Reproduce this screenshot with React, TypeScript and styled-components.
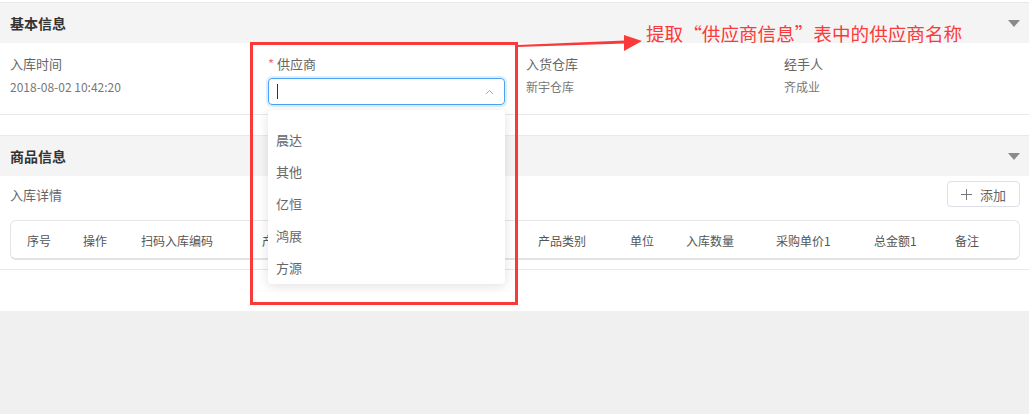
import styled, { createGlobalStyle } from "styled-components";

const GlobalStyle = createGlobalStyle`
  html, body {
    margin: 0;
    padding: 0;
    background: #f0f0f0;
    font-family: "Noto Sans CJK SC", "Liberation Sans", sans-serif;
  }
  * {
    box-sizing: border-box;
  }
`;

const Card = styled.div`
  position: relative;
  background: #fff;
  padding-top: 2px;
  padding-bottom: 41px;
  box-shadow: 0 1px 3px rgba(0, 0, 0, 0.12);
`;

const Section = styled.section<{ $gap?: number }>`
  margin-top: ${(props) => props.$gap || 0}px;
`;

const SectionHeader = styled.div`
  height: 41px;
  background: #f4f4f4;
  border-top: 1px solid #e9e9e9;
  display: flex;
  align-items: center;
  justify-content: space-between;
  padding: 0 9px 0 10px;
`;

const SectionTitle = styled.h3`
  margin: 0;
  font-size: 14px;
  font-weight: 700;
  color: #333;
`;

const Caret = styled.span`
  width: 0;
  height: 0;
  border-left: 6px solid transparent;
  border-right: 6px solid transparent;
  border-top: 7px solid #8a8a8a;
`;

const FormGrid = styled.div`
  display: grid;
  grid-template-columns: repeat(4, 258px);
  padding: 13px 0 0 10px;
  height: 72px;
  border-bottom: 1px solid #e8e8e8;
`;

const Field = styled.div`
  position: relative;
  display: flex;
  flex-direction: column;
`;

const Label = styled.label`
  font-size: 13px;
  line-height: 16px;
  color: #666;
`;

const Required = styled.span`
  color: #f56c6c;
  margin-right: 3px;
`;

const Value = styled.div`
  margin-top: 7px;
  font-size: 12px;
  line-height: 16px;
  color: #777;
`;

const SelectBox = styled.div`
  margin-top: 6px;
  width: 237px;
  height: 27px;
  border: 1px solid #4aa3f0;
  border-radius: 4px;
  box-shadow: 0 0 0 2px rgba(64, 158, 255, 0.18);
  display: flex;
  align-items: center;
  justify-content: space-between;
  padding: 0 10px 0 8px;
`;

const TextCaret = styled.span`
  width: 1px;
  height: 15px;
  background: #333;
`;

const Dropdown = styled.ul`
  position: absolute;
  left: 0;
  top: 54px;
  width: 237px;
  margin: 0;
  padding: 5px 0 0;
  list-style: none;
  background: #fff;
  border-radius: 4px;
  box-shadow: 0 2px 12px rgba(0, 0, 0, 0.12);
  z-index: 5;
`;

const Option = styled.li<{ $empty?: boolean }>`
  height: ${(props) => (props.$empty ? 9 : 32)}px;
  line-height: 31px;
  padding: 0 8px;
  font-size: 13px;
  color: #666;
`;

const Toolbar = styled.div`
  display: flex;
  justify-content: space-between;
  align-items: center;
  padding: 5px 9px 0 10px;
`;

const SubTitle = styled.span`
  font-size: 13px;
  color: #666;
`;

const AddButton = styled.button`
  width: 73px;
  height: 26px;
  border: 1px solid #dcdfe6;
  border-radius: 4px;
  background: #fff;
  color: #666;
  font-family: inherit;
  font-size: 13px;
  display: flex;
  align-items: center;
  justify-content: center;
  gap: 8px;
  padding: 0;
`;

const TableWrap = styled.div`
  margin: 13px 9px 0 10px;
  border: 1px solid #e6e6e6;
  border-bottom: 2px solid #e3e3e3;
  border-radius: 6px;
  height: 40px;
`;

const GoodsBody = styled.div`
  padding-bottom: 9px;
  border-bottom: 1px solid #e8e8e8;
`;

const HeadRow = styled.div`
  display: grid;
  grid-template-columns: 56px 58px 121px 138px 138px 92px 56px 90px 98px 81px 1fr;
  align-items: center;
  height: 38px;
  padding-left: 16px;
`;

const HeadCell = styled.div`
  font-size: 12px;
  color: #555;
  white-space: nowrap;
`;

const RedFrame = styled.div`
  position: absolute;
  left: 250px;
  top: 42px;
  width: 268px;
  height: 263px;
  border: 3px solid #fa3a3a;
  z-index: 6;
  pointer-events: none;
`;

const Arrow = styled.svg`
  position: absolute;
  left: 515px;
  top: 30px;
  z-index: 6;
`;

const Note = styled.div`
  position: absolute;
  left: 646px;
  top: 21px;
  font-family: "Noto Sans CJK SC", serif;
  font-size: 18.6px;
  line-height: 24px;
  color: #fa3a3a;
  white-space: nowrap;
  z-index: 6;
`;

const fields = [
  { label: "入库时间", value: "2018-08-02 10:42:20" },
  { label: "供应商", value: "", select: true },
  { label: "入货仓库", value: "新宇仓库" },
  { label: "经手人", value: "齐成业" },
];

const suppliers = ["晨达", "其他", "亿恒", "鸿展", "方源"];

const columns = [
  "序号",
  "操作",
  "扫码入库编码",
  "产品编码",
  "产品名称",
  "产品类别",
  "单位",
  "入库数量",
  "采购单价1",
  "总金额1",
  "备注",
];

function App() {
  return (
    <>
      <GlobalStyle />
      <Card>
        <Section>
          <SectionHeader>
            <SectionTitle>基本信息</SectionTitle>
            <Caret />
          </SectionHeader>
          <FormGrid>
            {fields.map((f) => (
              <Field key={f.label}>
                <Label>
                  {f.select && <Required>*</Required>}
                  {f.label}
                </Label>
                {f.select ? (
                  <>
                    <SelectBox>
                      <TextCaret />
                      <svg width="9" height="6" viewBox="0 0 9 6">
                        <path d="M1 5 L4.5 1.5 L8 5" fill="none" stroke="#aaa" strokeWidth="1" />
                      </svg>
                    </SelectBox>
                    <Dropdown>
                      <Option $empty />
                      {suppliers.map((s) => (
                        <Option key={s}>{s}</Option>
                      ))}
                    </Dropdown>
                  </>
                ) : (
                  <Value>{f.value}</Value>
                )}
              </Field>
            ))}
          </FormGrid>
        </Section>

        <Section $gap={20}>
          <SectionHeader>
            <SectionTitle>商品信息</SectionTitle>
            <Caret />
          </SectionHeader>
          <GoodsBody>
            <Toolbar>
              <SubTitle>入库详情</SubTitle>
              <AddButton>
                <svg width="11" height="11" viewBox="0 0 11 11">
                  <path d="M5.5 0 V11 M0 5.5 H11" stroke="#777" strokeWidth="1" />
                </svg>
                添加
              </AddButton>
            </Toolbar>
            <TableWrap>
              <HeadRow>
                {columns.map((c) => (
                  <HeadCell key={c}>{c}</HeadCell>
                ))}
              </HeadRow>
            </TableWrap>
          </GoodsBody>
        </Section>

        <RedFrame />
        <Arrow width="130" height="26" viewBox="0 0 130 26">
          <path d="M2 15 L110 10.5 L110 13.5 L2 17 Z" fill="#fa3a3a" />
          <polygon points="109,5 127,11 109,21" fill="#fa3a3a" />
        </Arrow>
        <Note>提取“供应商信息”表中的供应商名称</Note>
      </Card>
    </>
  );
}

export default App;
